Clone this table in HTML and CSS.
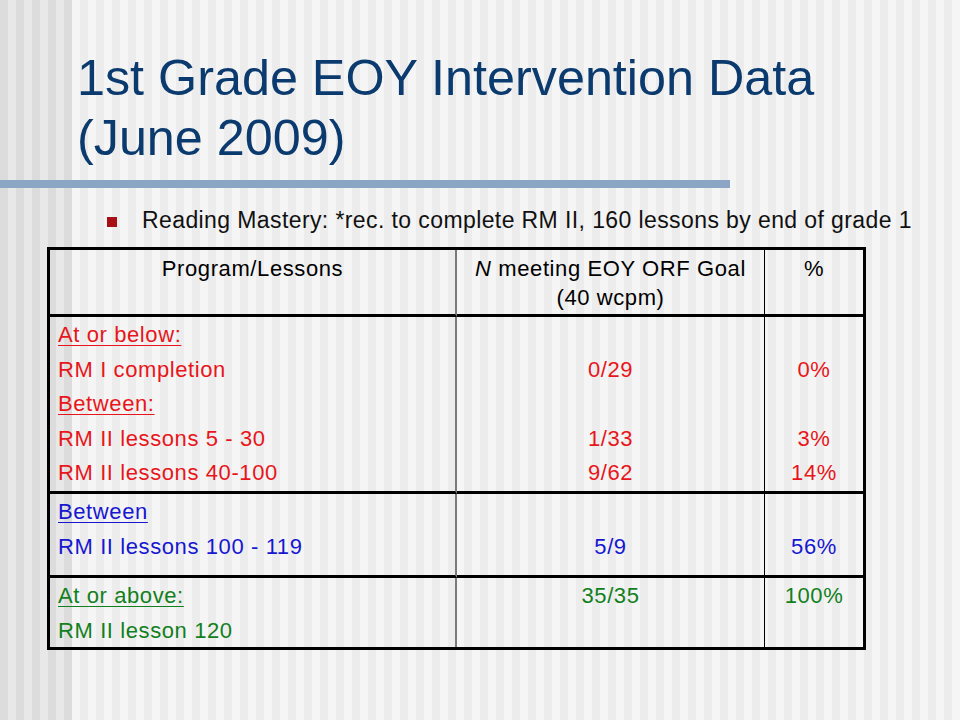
FILE: index.html
```html
<!DOCTYPE html>
<html lang="en">
<head>
<meta charset="utf-8">
<title>1st Grade EOY Intervention Data</title>
<link rel="stylesheet" href="styles.css">
</head>
<body>
<div class="slide">
  <h1 class="title">1st Grade EOY Intervention Data<br>(June 2009)</h1>
  <div class="rule"></div>
  <div class="bullet-line">
    <span class="bullet"></span>
    <span class="bullet-text">Reading Mastery: *rec. to complete RM II, 160 lessons by end of grade 1</span>
  </div>
  <div class="data-table">
    <div class="cell head c1"><p>Program/Lessons</p></div>
    <div class="cell head c2"><p><i>N</i> meeting EOY ORF Goal<br>(40 wcpm)</p></div>
    <div class="cell head c3"><p>%</p></div>

    <div class="cell r1 c1 red">
      <p class="u">At or below:</p>
      <p>RM I completion</p>
      <p class="u">Between:</p>
      <p>RM II lessons 5 - 30</p>
      <p>RM II lessons 40-100</p>
    </div>
    <div class="cell r1 c2 red center">
      <p>&nbsp;</p>
      <p>0/29</p>
      <p>&nbsp;</p>
      <p>1/33</p>
      <p>9/62</p>
    </div>
    <div class="cell r1 c3 red center">
      <p>&nbsp;</p>
      <p>0%</p>
      <p>&nbsp;</p>
      <p>3%</p>
      <p>14%</p>
    </div>

    <div class="cell r2 c1 blue">
      <p class="u">Between</p>
      <p>RM II lessons 100 - 119</p>
    </div>
    <div class="cell r2 c2 blue center">
      <p>&nbsp;</p>
      <p>5/9</p>
    </div>
    <div class="cell r2 c3 blue center">
      <p>&nbsp;</p>
      <p>56%</p>
    </div>

    <div class="cell r3 c1 green">
      <p class="u">At or above:</p>
      <p>RM II lesson 120</p>
    </div>
    <div class="cell r3 c2 green center">
      <p>35/35</p>
    </div>
    <div class="cell r3 c3 green center">
      <p>100%</p>
    </div>
  </div>
</div>
</body>
</html>
```
FILE: styles.css
```css
html, body {
  margin: 0;
  padding: 0;
}

body {
  font-family: "Liberation Sans", Arial, sans-serif;
}

.slide {
  width: 960px;
  height: 720px;
  overflow: hidden;
  box-sizing: border-box;
  padding-top: 48px;
  background-image:
    repeating-linear-gradient(90deg, #dcdcdc 0 8px, #e8e8e8 8px 16px),
    repeating-linear-gradient(90deg, #ececec 0 8px, #f5f5f5 8px 16px);
  background-size: 72px 100%, auto;
  background-repeat: no-repeat, repeat;
}

.title {
  margin: 0 0 0 77px;
  font-weight: normal;
  font-size: 50.3px;
  line-height: 60px;
  color: #0a3a6e;
}

.rule {
  margin-top: 12px;
  width: 730px;
  height: 8px;
  background: #8ba6c4;
}

.bullet-line {
  display: flex;
  align-items: flex-start;
  gap: 25px;
  margin-top: 18px;
  padding-left: 107px;
}

.bullet {
  flex: none;
  width: 10px;
  height: 10px;
  margin-top: 11px;
  background: #a80f14;
}

.bullet-text {
  font-size: 23px;
  line-height: 28px;
  letter-spacing: 0.4px;
  color: #111;
  white-space: nowrap;
}

.data-table {
  margin: 13px 0 0 47px;
  width: 819px;
  box-sizing: border-box;
  border: 3px solid #000;
  display: grid;
  grid-template-columns: 407px 308px 98px;
  grid-template-rows: 67px 177px 84px 69px;
  font-size: 22px;
  letter-spacing: 0.6px;
}

.cell {
  box-sizing: border-box;
  padding: 1px 8px 0 8px;
  border-bottom: 3px solid #000;
}

.cell p {
  margin: 0;
  line-height: 34.5px;
  white-space: nowrap;
}

.c1 {
  border-right: 2px solid #7a7a7a;
}

.c2 {
  border-right: 1px solid #000;
}

.r3 {
  border-bottom: 0;
}

.head {
  padding-top: 4px;
  text-align: center;
  color: #000;
}

.head p {
  line-height: 29px;
}

.head.c2 {
  padding-left: 0;
  padding-right: 0;
}

.center {
  text-align: center;
  padding-left: 0;
  padding-right: 0;
}

.u {
  text-decoration: underline;
  text-decoration-thickness: 1px;
  text-underline-offset: 3px;
}

.red {
  color: #e8161b;
}

.blue {
  color: #1717d0;
}

.green {
  color: #12801c;
}
```
